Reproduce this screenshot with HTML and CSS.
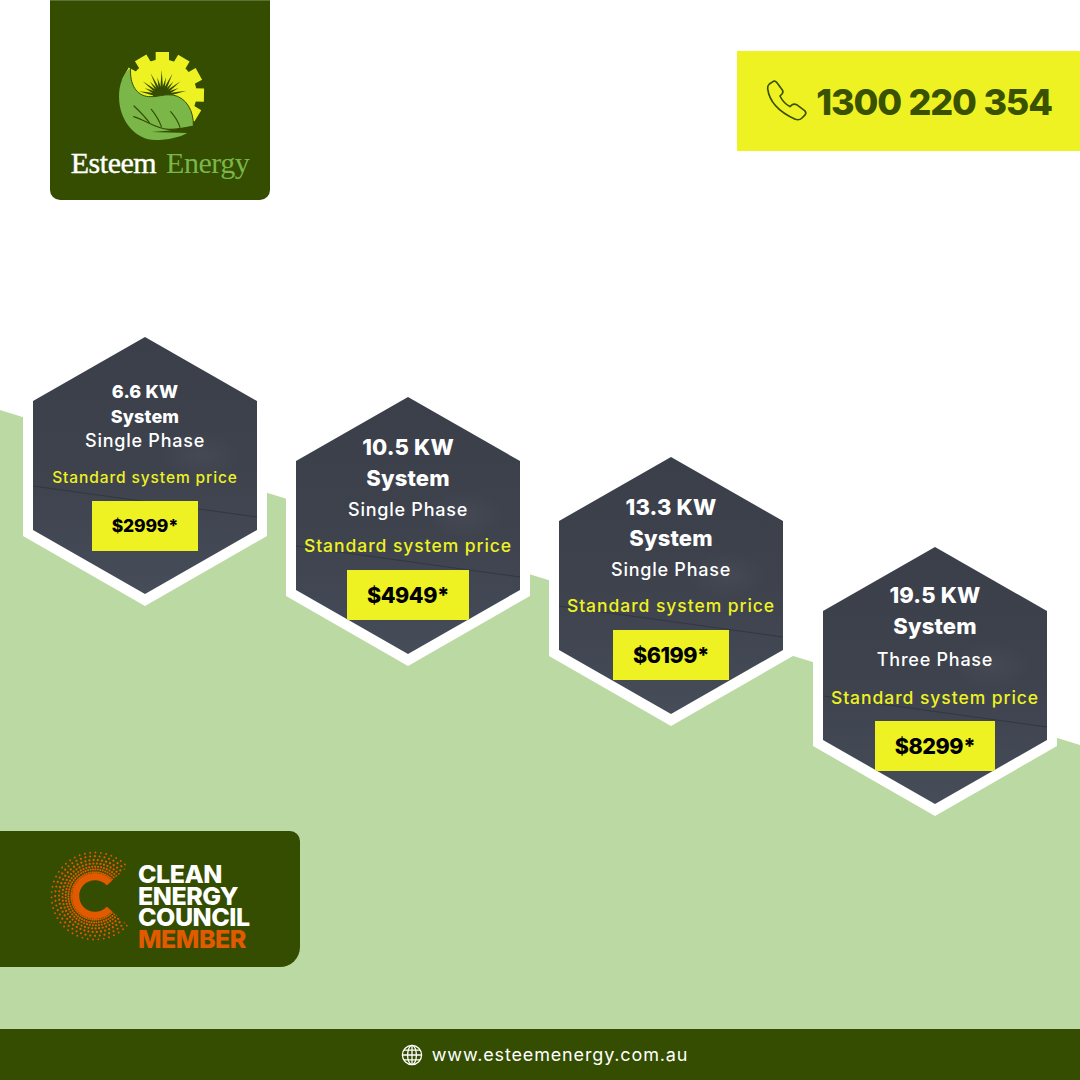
FILE: index.html
```html
<!DOCTYPE html>
<html lang="en">
<head>
<meta charset="utf-8">
<title>Esteem Energy</title>
<link rel="stylesheet" href="styles.css">
</head>
<body>
<div class="page">
  <div class="field"></div>
  <header class="top">
    <div class="brand">
      <svg class="brand-mark" viewBox="225 150 270 280" aria-hidden="true">
        <g fill="#eef222">
          <circle cx="366" cy="282" r="104"/>
          <rect x="347" y="156" width="40" height="30"/>
          <rect x="347" y="156" width="40" height="30" transform="rotate(31 366 282)"/>
          <rect x="347" y="156" width="40" height="30" transform="rotate(61 366 282)"/>
          <rect x="347" y="156" width="40" height="30" transform="rotate(91 366 282)"/>
          <rect x="347" y="156" width="40" height="30" transform="rotate(121 366 282)"/>
          <rect x="347" y="156" width="40" height="30" transform="rotate(-31 366 282)"/>
          <rect x="347" y="156" width="40" height="30" transform="rotate(-61 366 282)"/>
        </g>
        <g fill="#344d00">
          <circle cx="365" cy="288" r="26"/>
          <polygon points="361,265 365,210 369,265"/>
          <polygon points="361,265 365,230 369,265" transform="rotate(-13 365 288)"/>
          <polygon points="361,265 365,212 369,265" transform="rotate(-26 365 288)"/>
          <polygon points="361,265 365,232 369,265" transform="rotate(-39 365 288)"/>
          <polygon points="361,265 365,216 369,265" transform="rotate(-52 365 288)"/>
          <polygon points="361,265 365,232 369,265" transform="rotate(-65 365 288)"/>
          <polygon points="361,265 365,218 369,265" transform="rotate(-78 365 288)"/>
          <polygon points="361,265 365,230 369,265" transform="rotate(13 365 288)"/>
          <polygon points="361,265 365,214 369,265" transform="rotate(26 365 288)"/>
          <polygon points="361,265 365,232 369,265" transform="rotate(39 365 288)"/>
          <polygon points="361,265 365,216 369,265" transform="rotate(52 365 288)"/>
          <polygon points="361,265 365,232 369,265" transform="rotate(65 365 288)"/>
          <polygon points="361,265 365,212 369,265" transform="rotate(78 365 288)"/>
        </g>
        <path fill="#7ab648" d="M272 203 C248 222 237 255 237 290 C237 365 290 420 345 420 C385 420 420 412 442 399 L335 396 L382 392 L460 378 C462 335 440 292 398 285 C370 281 350 293 325 290 C290 286 268 255 272 203 Z"/>
        <path fill="none" stroke="#344d00" stroke-width="3" d="M272 203 C268 255 290 286 325 290 C350 293 370 281 398 285 C440 292 462 335 460 378"/>
        <path fill="none" stroke="#344d00" stroke-width="3.5" stroke-linecap="round" d="M281 350 C320 362 345 385 385 388 C410 390 435 384 458 379"/>
        <path fill="none" stroke="#344d00" stroke-width="3.5" stroke-linecap="round" d="M282 318 C300 335 315 350 328 368 M334 328 C348 345 358 362 364 380 M392 335 C405 350 415 365 420 382"/>
      </svg>
      <div class="brand-name"><span class="brand-a">Esteem</span><span class="brand-b">Energy</span></div>
    </div>
    <div class="phone">
      <svg class="phone-icon" viewBox="105 103 130 130" aria-hidden="true">
        <path d="M118 118 L130 110 Q136 108 141 114 L157 136 Q161 142 156 148 L150 154 Q160 175 180 186 L186 181 Q192 176 200 180 L224 198 Q230 204 226 210 L216 220 Q208 228 196 224 Q120 190 113 132 Q112 124 118 118Z"/>
      </svg>
      <span class="phone-number">1300 220 354</span>
    </div>
  </header>

  <section class="systems">
    <article class="frame frame-1">
      <div class="hex hex-small">
        <svg class="wire" viewBox="0 0 224 257" aria-hidden="true"><line x1="0" y1="149" x2="224" y2="180"/></svg>
        <h2 class="kw">6.6 KW<br>System</h2>
        <p class="phase">Single Phase</p>
        <p class="label">Standard system price</p>
        <p class="price">$2999*</p>
      </div>
    </article>
    <article class="frame frame-2">
      <div class="hex">
        <svg class="wire" viewBox="0 0 224 257" aria-hidden="true"><line x1="0" y1="149" x2="224" y2="180"/></svg>
        <h2 class="kw">10.5 KW<br>System</h2>
        <p class="phase">Single Phase</p>
        <p class="label">Standard system price</p>
        <p class="price">$4949*</p>
      </div>
    </article>
    <article class="frame frame-3">
      <div class="hex">
        <svg class="wire" viewBox="0 0 224 257" aria-hidden="true"><line x1="0" y1="149" x2="224" y2="180"/></svg>
        <h2 class="kw">13.3 KW<br>System</h2>
        <p class="phase">Single Phase</p>
        <p class="label">Standard system price</p>
        <p class="price">$6199*</p>
      </div>
    </article>
    <article class="frame frame-4">
      <div class="hex hex-last">
        <svg class="wire" viewBox="0 0 224 257" aria-hidden="true"><line x1="0" y1="149" x2="224" y2="180"/></svg>
        <h2 class="kw">19.5 KW<br>System</h2>
        <p class="phase">Three Phase</p>
        <p class="label">Standard system price</p>
        <p class="price">$8299*</p>
      </div>
    </article>
  </section>

  <aside class="member">
    <svg class="member-mark" viewBox="-48 -48 84 96" aria-hidden="true">
      <g fill="none" stroke="#e25a00" stroke-linecap="round">
        <circle r="43.5" stroke-width="1.9" stroke-dasharray="0 5.4"/>
        <circle r="39.8" stroke-width="2.2" stroke-dasharray="0 4.8"/>
        <circle r="36" stroke-width="2.3" stroke-dasharray="0 4.2"/>
        <circle r="32.5" stroke-width="2.3" stroke-dasharray="0 3.6"/>
        <circle r="29.3" stroke-width="2.2" stroke-dasharray="0 3"/>
        <circle r="26.6" stroke-width="2.1" stroke-dasharray="0 2.5"/>
        <circle r="19.4" stroke-width="7.2"/>
        <circle r="23.8" stroke-width="2" stroke-dasharray="0 2.1"/>
      </g>
      <polygon class="member-gap" points="0,0 48,-43 48,43"/>
    </svg>
    <p class="member-text">CLEAN<br>ENERGY<br>COUNCIL<br><span class="member-accent">MEMBER</span></p>
  </aside>

  <footer class="foot">
    <svg class="globe" viewBox="0 0 22 22" aria-hidden="true">
      <circle cx="11" cy="11" r="9.6"/>
      <ellipse cx="11" cy="11" rx="4.4" ry="9.6"/>
      <path d="M1.4 11H20.6M2.8 6.2H19.2M2.8 15.8H19.2M11 1.4V20.6"/>
    </svg>
    <span class="site">www.esteemenergy.com.au</span>
  </footer>
</div>
</body>
</html>
```
FILE: styles.css
```css
* { box-sizing: border-box; }
html, body { margin: 0; padding: 0; }
body { background: #fff; font-family: Inter, "Open Sans", sans-serif; }

.page {
  position: relative;
  width: 1080px;
  height: 1080px;
  overflow: hidden;
  display: flex;
  flex-direction: column;
  background: #fff;
}
.field {
  position: absolute;
  inset: 0;
  background: #bbd9a3;
  clip-path: polygon(0 410px, 1080px 745px, 1080px 1029px, 0 1029px);
}

.top {
  position: relative;
  display: flex;
  justify-content: space-between;
  align-items: flex-start;
  height: 200px;
  padding-left: 50px;
}
.brand {
  width: 220px;
  height: 200px;
  background: #344d00;
  border-top: 1px solid #5c7235;
  border-radius: 0 0 10px 10px;
  display: flex;
  flex-direction: column;
  align-items: center;
  padding-top: 49px;
}
.brand-mark { width: 90px; height: 93.3px; display: block; }
.brand-name {
  display: flex;
  gap: 10px;
  margin-top: 2px;
  font-family: "Liberation Serif", serif;
  font-size: 30px;
  line-height: 36px;
  letter-spacing: -0.5px;
  white-space: nowrap;
}
.brand-a { color: #fff; -webkit-text-stroke: 0.4px #fff; }
.brand-b { color: #7ab648; }

.phone {
  margin-top: 51px;
  width: 343px;
  height: 100px;
  background: #eef222;
  display: flex;
  align-items: center;
  padding-left: 28px;
  gap: 8px;
}
.phone-icon { width: 43.3px; height: 43.3px; fill: none; stroke: #3a5200; stroke-width: 5; stroke-linejoin: round; }
.phone-number { margin-top: 2px; color: #3a5200; font-size: 36px; font-weight: 800; letter-spacing: -1.2px; word-spacing: 1px; white-space: nowrap; }

.systems {
  position: relative;
  display: flex;
  align-items: flex-start;
  gap: 19px;
  margin: 125px 0 0 23px;
  height: 491px;
}
.frame {
  flex: none;
  width: 244px;
  height: 281px;
  padding: 12px 10px;
  background: #fff;
  clip-path: polygon(50% 0, 100% 70px, 100% 211px, 50% 100%, 0 211px, 0 70px);
}
.frame-2 { margin-top: 60px; }
.frame-3 { margin-top: 120px; }
.frame-4 { margin-top: 210px; margin-left: 1px; }

.hex {
  position: relative;
  height: 257px;
  padding-top: 35px;
  display: flex;
  flex-direction: column;
  align-items: center;
  text-align: center;
  color: #fff;
  background:
    radial-gradient(ellipse 40px 24px at 75% 46%, rgba(120, 125, 135, 0.12), transparent),
    linear-gradient(180deg, #3a3f4a 0%, #3d424d 50%, #464c58 100%);
  clip-path: polygon(50% 0, 100% 64px, 100% 193px, 50% 100%, 0 193px, 0 64px);
}
.wire { position: absolute; inset: 0; width: 224px; height: 257px; }
.wire line { stroke: #2d313b; stroke-width: 0.7; }
.hex > p, .hex > h2 { position: relative; margin: 0; white-space: nowrap; }

.kw { font-size: 22px; line-height: 31px; font-weight: 800; letter-spacing: 0.15px; }
.phase { margin-top: 4px !important; font-size: 18px; line-height: 24px; font-weight: 500; letter-spacing: 0.75px; }
.label { margin-top: 12px !important; font-size: 17.5px; line-height: 24px; font-weight: 500; letter-spacing: 0.95px; color: #eef222; }
.price {
  margin-top: 12px !important;
  height: 50px;
  padding: 0 20px;
  background: #eef222;
  color: #000;
  font-size: 21.5px;
  line-height: 50px;
  font-weight: 800;
  letter-spacing: -0.45px;
}

.hex-small { padding-top: 42px; }
.hex-small .kw { font-size: 18px; line-height: 25px; }
.hex-small .phase { margin-top: 0 !important; }
.hex-small .label { margin-top: 14px !important; font-size: 15.5px; line-height: 22px; letter-spacing: 0.9px; }
.hex-small .price { font-size: 17.5px; letter-spacing: -0.2px; }

.hex-last { padding-top: 33px; }
.hex-last .phase { margin-top: 6px !important; }
.hex-last .label { margin-top: 14px !important; }
.hex-last .price { margin-top: 11px !important; }

.member {
  position: relative;
  margin-top: 15px;
  width: 300px;
  height: 136px;
  background: #344d00;
  border-radius: 0 10px 20px 0;
  display: flex;
  align-items: flex-start;
  padding-left: 47px;
  gap: 7px;
}
.member-mark { width: 84px; height: 96px; flex: none; margin-top: 17px; }
.member-gap { fill: #344d00; }
.member-text {
  margin: 33px 0 0;
  color: #fff;
  font-size: 25px;
  line-height: 21.5px;
  font-weight: 800;
  letter-spacing: -0.5px;
}
.member-accent { color: #e25a00; }

.foot {
  position: relative;
  margin-top: auto;
  height: 51px;
  padding-left: 9px;
  background: #344d00;
  color: #fff;
  display: flex;
  align-items: center;
  justify-content: center;
  gap: 9px;
}
.globe { width: 22px; height: 22px; fill: none; stroke: #fff; stroke-width: 1.3; }
.site { font-size: 18px; letter-spacing: 0.85px; }
```
